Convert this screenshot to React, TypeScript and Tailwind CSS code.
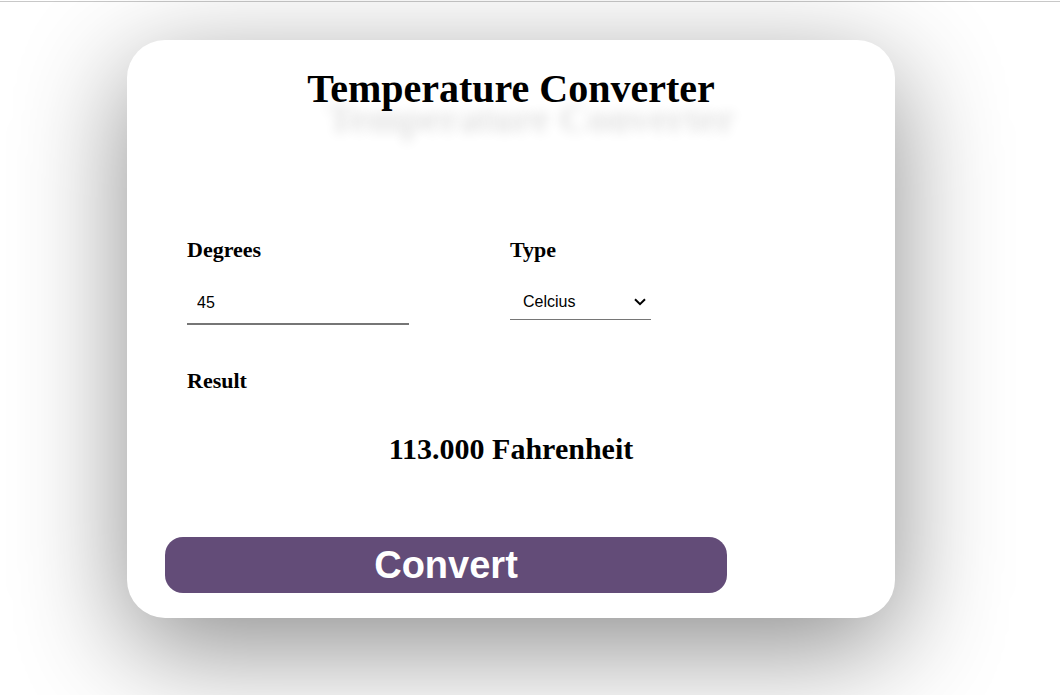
import { useState, type FormEvent } from "react";

type Unit = "celcius" | "fahrenheit";

function convert(degrees: number, unit: Unit): string {
  return unit === "celcius"
    ? `${((degrees * 9) / 5 + 32).toFixed(3)} Fahrenheit`
    : `${(((degrees - 32) * 5) / 9).toFixed(3)} Celcius`;
}

export default function App() {
  const [degrees, setDegrees] = useState("45");
  const [unit, setUnit] = useState<Unit>("celcius");
  const [result, setResult] = useState(convert(45, "celcius"));

  const onSubmit = (event: FormEvent) => {
    event.preventDefault();
    setResult(convert(Number(degrees), unit));
  };

  return (
    <div className="min-h-screen overflow-hidden bg-white pt-px font-['Liberation_Serif','Times_New_Roman',serif] text-black">
      <main className="flex justify-center border-t border-[#c8c8c8] pt-[38px] pr-[38px] pb-[77px]">
        <form
          onSubmit={onSubmit}
          className="w-full max-w-[768px] rounded-[38px] bg-white px-[38px] pt-[26px] pb-[25px] shadow-[0_30px_110px_rgba(0,0,0,0.45)]"
        >
          <h1 className="text-center text-[40px] leading-[46px] font-bold [text-shadow:20px_30px_12px_rgba(0,0,0,0.12)]">
            Temperature Converter
          </h1>

          <div className="mt-[125px] grid grid-cols-[323px_1fr] pl-[22px] text-[22px] leading-[26px] font-bold">
            <div className="flex flex-col items-start gap-[18px]">
              <label htmlFor="degrees">Degrees</label>
              <input
                id="degrees"
                type="text"
                inputMode="decimal"
                value={degrees}
                onChange={(e) => setDegrees(e.target.value)}
                className="h-[44px] w-[222px] border-b-2 border-[#767676] px-[10px] pt-px font-['Liberation_Sans',Arial,sans-serif] text-base font-normal outline-none"
              />
            </div>
            <div className="flex flex-col items-start gap-[18px]">
              <label htmlFor="type">Type</label>
              <div className="relative">
                <select
                  id="type"
                  value={unit}
                  onChange={(e) => setUnit(e.target.value as Unit)}
                  className="block h-[39px] w-[141px] appearance-none border-b border-[#767676] bg-white pt-[3px] pr-6 pl-[13px] font-['Liberation_Sans',Arial,sans-serif] text-base font-normal outline-none"
                >
                  <option value="celcius">Celcius</option>
                  <option value="fahrenheit">Fahrenheit</option>
                </select>
                <svg
                  aria-hidden="true"
                  viewBox="0 0 12 8"
                  className="pointer-events-none absolute top-[17px] right-[5px] h-2 w-3 fill-none stroke-black stroke-2"
                >
                  <path d="M1 1.2 6 6.2 11 1.2" />
                </svg>
              </div>
            </div>
          </div>

          <h2 className="mt-[43px] pl-[22px] text-[22px] leading-[26px] font-bold">Result</h2>
          <output htmlFor="degrees type" className="mt-[37px] block text-center text-[30px] leading-[36px] font-bold">
            {result}
          </output>

          <button
            type="submit"
            className="mt-[70px] block h-14 w-full max-w-[562px] rounded-[18px] bg-[#634c78] font-['Liberation_Sans',Arial,sans-serif] text-[38px] leading-[44px] font-bold text-white"
          >
            Convert
          </button>
        </form>
      </main>
    </div>
  );
}
